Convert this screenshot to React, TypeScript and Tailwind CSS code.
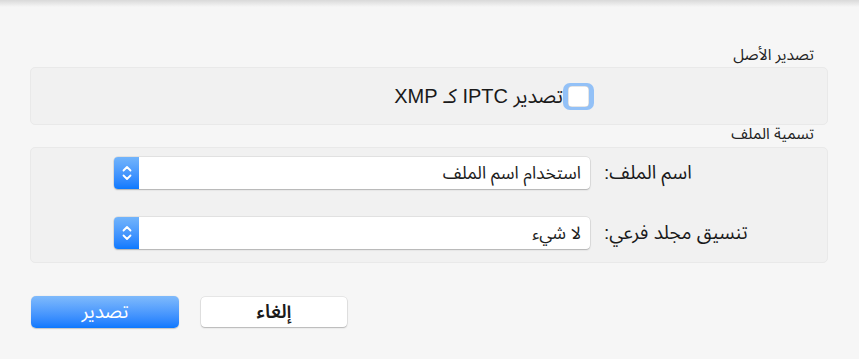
import React from "react";

const font = {
  fontFamily:
    '"Liberation Sans", "Noto Sans Arabic", "Noto Naskh Arabic", "DejaVu Sans", sans-serif',
};

function Chevrons() {
  return (
    <svg width="12" height="18" viewBox="0 0 12 18" fill="none">
      <path d="M2.5 6.5 L6 3 L9.5 6.5" stroke="white" strokeWidth="1.8" strokeLinecap="round" strokeLinejoin="round" />
      <path d="M2.5 11.5 L6 15 L9.5 11.5" stroke="white" strokeWidth="1.8" strokeLinecap="round" strokeLinejoin="round" />
    </svg>
  );
}

function Popup({ value }: { value: string }) {
  return (
    <div
      dir="ltr"
      className="flex h-[32px] w-[476px] rounded-[4px] bg-white shadow-[0_0_0_0.5px_rgba(0,0,0,0.12),0_1px_1.5px_rgba(0,0,0,0.22)]"
    >
      <div className="flex w-[25px] items-center justify-center rounded-l-[4px] bg-gradient-to-b from-[#72b4fb] to-[#0a79fe]">
        <Chevrons />
      </div>
      <div dir="rtl" className="flex flex-1 items-center pr-[9px] text-[17.5px] text-[#1d1d1d]">
        {value}
      </div>
    </div>
  );
}

export default function App() {
  return (
    <div dir="rtl" style={font} className="relative h-[359px] w-[859px] overflow-hidden bg-[#f6f6f6]">
      <div className="absolute left-0 right-0 top-0 h-[7px] bg-gradient-to-b from-[#d9d9d9] to-[#f6f6f6]" />
      <div className="flex flex-col pl-[30px] pr-[31px] pt-[47px]">
        <div className="h-[16px] pr-[14px] text-[15.5px] leading-[16px] text-[#222]">تصدير الأصل</div>
        <div className="mt-[4px] flex h-[58px] items-center rounded-[5px] border border-[#e9e9e9] bg-[#f1f1f1] pr-[233px]">
          <div className="flex items-center">
            <div className="flex h-[27px] w-[31px] items-center justify-center rounded-[7px] bg-[#93c1f7]">
              <div className="h-[21px] w-[21px] rounded-[4px] bg-white shadow-[inset_0_0_0_0.5px_rgba(0,0,0,0.2)]" />
            </div>
            <span className="text-[20px] leading-[20px] text-[#1a1a1a]">تصدير IPTC كـ XMP</span>
          </div>
        </div>
        <div className="h-[22px] pb-[6px] pr-[14px] pt-[1px] text-[15.5px] leading-[16px] text-[#222]">تسمية الملف</div>
        <div className="flex h-[116px] flex-col gap-[28px] rounded-[5px] border border-[#e9e9e9] bg-[#f1f1f1] pt-[9px]">
          <div className="flex items-center">
            <div className="w-[223px] text-left text-[19px] text-[#1a1a1a]">اسم الملف:</div>
            <div className="mr-[14px]">
              <Popup value="استخدام اسم الملف" />
            </div>
          </div>
          <div className="flex items-center">
            <div className="w-[223px] text-left text-[19px] text-[#1a1a1a]">تنسيق مجلد فرعي:</div>
            <div className="mr-[14px]">
              <Popup value="لا شيء" />
            </div>
          </div>
        </div>
        <div dir="ltr" className="mt-[33px] flex items-start gap-[22px] pl-[1px]">
          <button className="flex h-[32px] w-[148px] items-center justify-center rounded-[5px] bg-gradient-to-b from-[#7fbafb] to-[#0b78fe] text-[19px] text-white shadow-[0_0.5px_1px_rgba(0,0,0,0.2)]">
            تصدير
          </button>
          <button className="mt-[1px] flex h-[30px] w-[146px] items-center justify-center rounded-[4px] bg-white text-[19px] font-semibold text-[#1a1a1a] shadow-[0_0_0_0.5px_rgba(0,0,0,0.12),0_1px_1.5px_rgba(0,0,0,0.22)]">
            إلغاء
          </button>
        </div>
      </div>
    </div>
  );
}
